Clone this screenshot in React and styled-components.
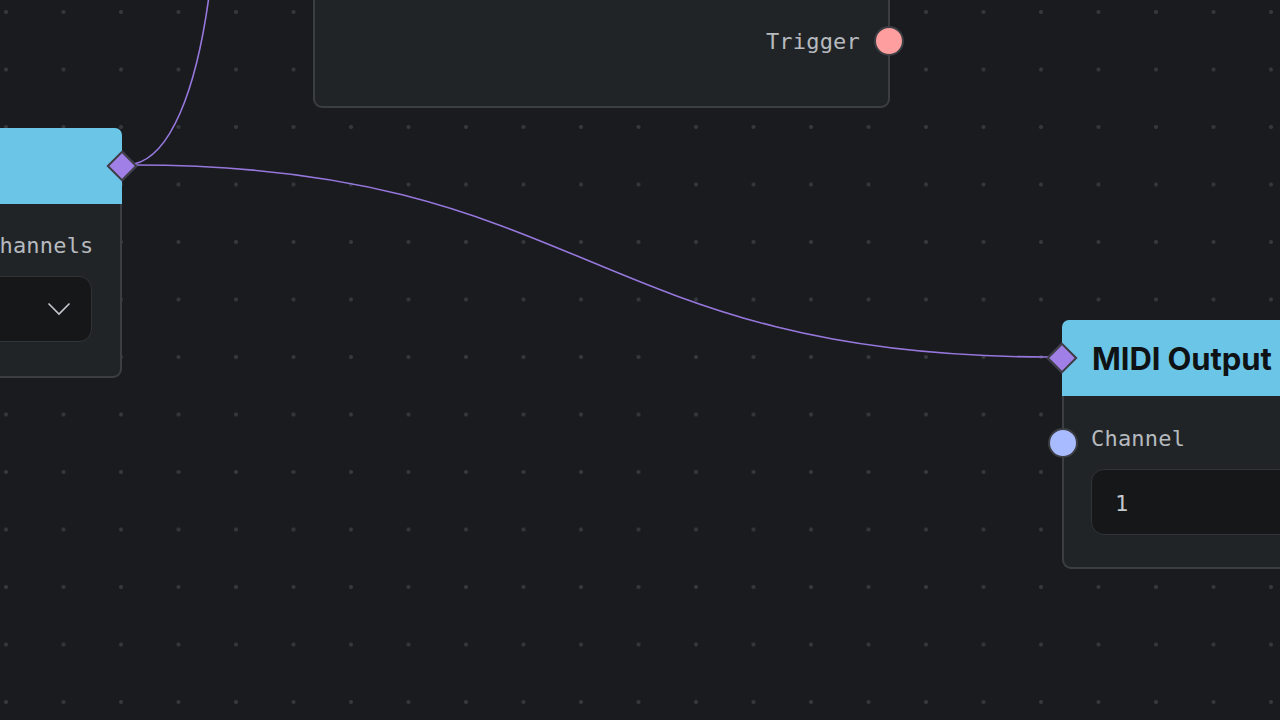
import React from 'react';
import styled, { createGlobalStyle } from 'styled-components';

const GlobalStyle = createGlobalStyle`
  html, body, #root {
    margin: 0;
    padding: 0;
    width: 100%;
    height: 100%;
    overflow: hidden;
  }
  body {
    background: #191b1e;
    font-family: Inter, "Noto Sans", sans-serif;
  }
`;

// canvas with a dotted grid, 50px grid at 1.15 zoom
const Canvas = styled.div`
  position: relative;
  width: 1280px;
  height: 720px;
  overflow: hidden;
  background-color: #191b1e;
  background-image: radial-gradient(circle, #34373b 1.7px, transparent 2.3px);
  background-size: 57.5px 57.5px;
  background-position: -22.75px -16.75px;
`;

const Edges = styled.svg`
  position: absolute;
  inset: 0;
  width: 100%;
  height: 100%;
  pointer-events: none;
`;

const Node = styled.div`
  position: absolute;
  left: ${p => p.x}px;
  top: ${p => p.y}px;
  width: ${p => p.w}px;
  height: ${p => (p.h ? `${p.h}px` : 'auto')};
  box-sizing: border-box;
  background: #212427;
  border: 2px solid #3b3e43;
  border-radius: 9px;
  display: flex;
  flex-direction: column;
`;

const Header = styled.div`
  height: 76px;
  flex-shrink: 0;
  display: flex;
  align-items: center;
  padding-left: 30px;
  background: #6bc5e6;
  border-radius: 7px 7px 0 0;
  margin: -2px -2px 0;
  font-family: Inter, "Noto Sans", sans-serif;
  font-weight: 700;
  font-size: 31px;
  color: #0f1215;
  letter-spacing: -0.1px;
`;

const Body = styled.div`
  flex: 1;
  display: flex;
  flex-direction: column;
  align-items: ${p => p.align || 'stretch'};
  padding: ${p => p.pad || '30px 27px 33px'};
`;

const Field = styled.div`
  display: flex;
  flex-direction: column;
  gap: 17px;
`;

const Label = styled.div`
  font-family: "DejaVu Sans Mono", "Liberation Mono", monospace;
  font-size: 22px;
  letter-spacing: 0.2px;
  line-height: 26px;
  color: #b6babf;
`;

const InputBox = styled.div`
  height: 66px;
  box-sizing: border-box;
  display: flex;
  align-items: center;
  justify-content: ${p => (p.select ? 'flex-end' : 'flex-start')};
  padding: ${p => (p.select ? '0 20px 0 0' : '2px 0 0 23px')};
  background: #151719;
  border: 1px solid #303337;
  border-radius: 13px;
  font-family: "DejaVu Sans Mono", "Liberation Mono", monospace;
  font-size: 22px;
  color: #c4c8cc;
`;

// handles sit on the node border, so they are placed against the node box
const Diamond = styled.div`
  position: absolute;
  top: 25px;
  ${p => (p.side === 'left' ? 'left: -13px;' : 'right: -13px;')}
  width: 18px;
  height: 18px;
  background: #a07fe6;
  border: 2px solid #3b3e43;
  transform: rotate(45deg);
`;

const Dot = styled.div`
  position: absolute;
  top: ${p => p.top}px;
  ${p => (p.side === 'left' ? 'left: -16px;' : 'right: -16px;')}
  width: 26px;
  height: 26px;
  border-radius: 50%;
  background: ${p => p.color};
  border: 2px solid #3b3e43;
`;

const Chevron = () => (
  <svg width="24" height="14" viewBox="0 0 24 14">
    <polyline points="1.5,1.5 12,12 22.5,1.5" fill="none" stroke="#c4c8cc" strokeWidth="1.6" />
  </svg>
);

export default function App() {
  return (
    <>
      <GlobalStyle />
      <Canvas>
        <Edges viewBox="0 0 1280 720">
          <path
            d="M134,164 C170,156 196,92 209,-4"
            fill="none"
            stroke="#9677dc"
            strokeWidth="1.6"
          />
          <path
            d="M134,165 C585,165 592,357 1049,357"
            fill="none"
            stroke="#9677dc"
            strokeWidth="1.6"
          />
        </Edges>

        {/* trigger source, mostly above the viewport */}
        <Node x={313} y={-80} w={577} h={188}>
          <Body align="flex-end" pad="107px 28px 0">
            <Label>Trigger</Label>
          </Body>
          <Dot side="right" top={104} color="#ff9e9e" />
        </Node>

        {/* channel splitter, cut by the left edge */}
        <Node x={-42} y={128} w={164}>
          <Header />
          <Diamond side="right" />
          <Body pad="29px 28px 34px 26px">
            <Field>
              <Label>Channels</Label>
              <InputBox select>
                <Chevron />
              </InputBox>
            </Field>
          </Body>
        </Node>

        <Node x={1062} y={320} w={420}>
          <Header>MIDI Output</Header>
          <Diamond side="left" />
          <Body pad="30px 27px 32px">
            <Field>
              <Label>Channel</Label>
              <InputBox>1</InputBox>
            </Field>
          </Body>
          <Dot side="left" top={106} color="#a9bbff" />
        </Node>
      </Canvas>
    </>
  );
}
